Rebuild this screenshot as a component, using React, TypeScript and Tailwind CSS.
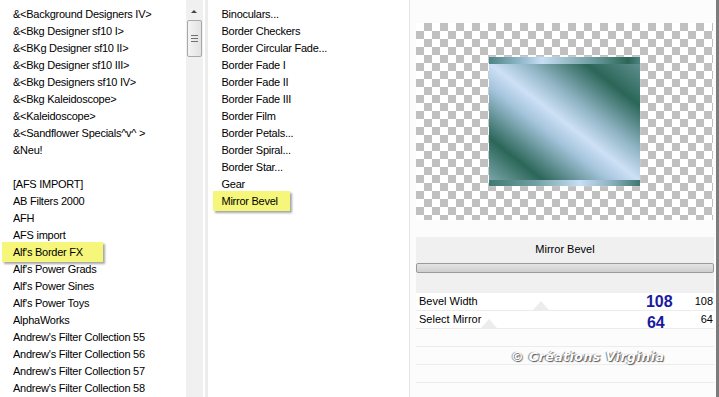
import React from 'react';

const leftItems = [
  '&<Background Designers IV>',
  '&<Bkg Designer sf10 I>',
  '&<BKg Designer sf10 II>',
  '&<Bkg Designer sf10 III>',
  '&<Bkg Designers sf10 IV>',
  '&<Bkg Kaleidoscope>',
  '&<Kaleidoscope>',
  '&<Sandflower Specials^v^ >',
  '&Neu!',
  '',
  '[AFS IMPORT]',
  'AB Filters 2000',
  'AFH',
  'AFS import',
  "Alf's Border FX",
  "Alf's Power Grads",
  "Alf's Power Sines",
  "Alf's Power Toys",
  'AlphaWorks',
  "Andrew's Filter Collection 55",
  "Andrew's Filter Collection 56",
  "Andrew's Filter Collection 57",
  "Andrew's Filter Collection 58",
];

const midItems = [
  'Binoculars...',
  'Border Checkers',
  'Border Circular Fade...',
  'Border Fade I',
  'Border Fade II',
  'Border Fade III',
  'Border Film',
  'Border Petals...',
  'Border Spiral...',
  'Border Star...',
  'Gear',
  'Mirror Bevel',
];

// petit triangle gris (curseur du slider)
const Thumb: React.FC<{ left: string }> = ({ left }) => (
  <span
    className={`absolute bottom-0 ${left} h-0 w-0 border-x-[8px] border-b-[9px] border-x-transparent border-b-[#ececec]`}
  />
);

export default function App() {
  return (
    <div
      className="flex h-[397px] w-[719px] overflow-hidden bg-white text-[11px] tracking-[-0.25px] text-black"
      style={{ fontFamily: '"Liberation Sans", Arial, sans-serif' }}
    >
      {/* liste des catégories */}
      <div className="w-[186px] pt-[6px]">
        {leftItems.map((t, i) => (
          <div key={i} className="relative">
            {t === "Alf's Border FX" && (
              <span className="absolute left-[2px] -top-[2px] h-[20px] w-[101px] bg-[#f6f67a] shadow-[2px_2px_2px_rgba(0,0,0,0.35)]" />
            )}
            <div className="relative h-[17px] whitespace-nowrap pl-[13px] leading-[17px]">{t}</div>
          </div>
        ))}
      </div>

      {/* barre de défilement */}
      <div className="flex w-[17px] flex-col items-center bg-[#f0f0f0] pt-[10px]">
        <span className="h-0 w-0 border-x-[3px] border-b-[3px] border-x-transparent border-b-[#444]" />
        <div className="mt-[7px] flex h-[37px] w-[15px] flex-col items-center justify-center gap-[2px] rounded-[2px] border border-[#a8a8a8] bg-gradient-to-r from-[#f4f4f4] to-[#e2e2e2]">
          <span className="h-px w-[7px] bg-[#707070]" />
          <span className="h-px w-[7px] bg-[#707070]" />
          <span className="h-px w-[7px] bg-[#707070]" />
        </div>
      </div>
      <div className="w-[2px] bg-white" />
      <div className="w-[4px] bg-[#ececec]" />

      {/* liste des effets */}
      <div className="w-[201px] pt-[6px]">
        {midItems.map((t) => (
          <div key={t} className="relative h-[17px] whitespace-nowrap pl-[13px] leading-[17px]">
            {t === 'Mirror Bevel' && (
              <span className="absolute left-[5px] -top-[2px] h-[20px] w-[77px] bg-[#f6f67a] shadow-[2px_2px_2px_rgba(0,0,0,0.35)]" />
            )}
            <span className="relative">{t}</span>
          </div>
        ))}
      </div>

      {/* aperçu + réglages */}
      <div className="flex w-[310px] flex-col border-l border-r-[3px] border-l-[#e4e4e4] border-r-[#7c7c7c] bg-[#fcfcfc] pl-[6px] pr-[3px] tracking-normal">
        <div className="mt-[23px] flex h-[197px] w-[297px] items-start justify-center bg-[conic-gradient(#c0c0c0_25%,#fff_0_50%,#c0c0c0_0_75%,#fff_0)] bg-[length:16px_16px] pt-[34px]">
          <div className="flex h-[129px] w-[151px] flex-col shadow-[0_0_1px_rgba(255,255,255,0.9)]">
            <div className="h-[7px] bg-[linear-gradient(90deg,#4d8585,#9fc2d8_25%,#c8def4_35%,#6a9a9c_70%,#2a6656_92%,#4e8282)]" />
            <div className="flex-1 bg-[linear-gradient(38deg,#7aa5a8_0%,#2b6658_18%,#a4c4dc_40%,#cde0f6_50%,#94b7c8_62%,#2b6658_82%,#5e8f8f_100%)]" />
            <div className="h-[6px] bg-[linear-gradient(90deg,#3f7a72,#6f9ea2_30%,#c8def4_60%,#8fb3c4_80%,#3e7670)]" />
          </div>
        </div>

        <div className="mt-[17px] h-[56px] w-[298px] bg-[#f0f0f0]">
          <div className="pt-[4px] text-center leading-[17px]">Mirror Bevel</div>
          <div className="mt-[5px] h-[10px] rounded-[2px] border border-[#9a9a9a] bg-gradient-to-b from-[#e4e4e4] to-[#cfcfcf]" />
        </div>

        <div className="w-[298px]">
          <div className="relative flex h-[18px] items-center border-b border-[#ececec] bg-white">
            <Thumb left="left-[117px]" />
            <span className="relative pl-[3px]">Bevel Width</span>
            <span className="relative ml-auto mr-[22px] text-[16px] font-bold leading-none text-[#1a1aa0]">108</span>
            <span className="relative pr-[1px]">108</span>
          </div>
          <div className="relative flex h-[18px] items-center border-b border-[#ececec] bg-white">
            <Thumb left="left-[65px]" />
            <span className="relative pl-[3px]">Select Mirror</span>
            <span className="relative ml-auto mr-[36px] mt-[6px] text-[16px] font-bold leading-none text-[#1a1aa0]">64</span>
            <span className="relative pr-[1px]">64</span>
          </div>
          <div className="h-[18px] border-b border-[#ececec]" />
          <div className="relative h-[18px] border-b border-[#ececec]">
            <span
              className="absolute left-[95px] top-[1px] whitespace-nowrap text-[12.5px] font-bold italic tracking-[0.5px] text-white [text-shadow:1px_1px_1px_#555,-1px_0_1px_#888]"
              style={{ fontFamily: '"DejaVu Sans", "Liberation Sans", sans-serif' }}
            >
              © Créations Virginia
            </span>
          </div>
          <div className="h-[18px] border-b border-[#ececec]" />
        </div>
      </div>
    </div>
  );
}
